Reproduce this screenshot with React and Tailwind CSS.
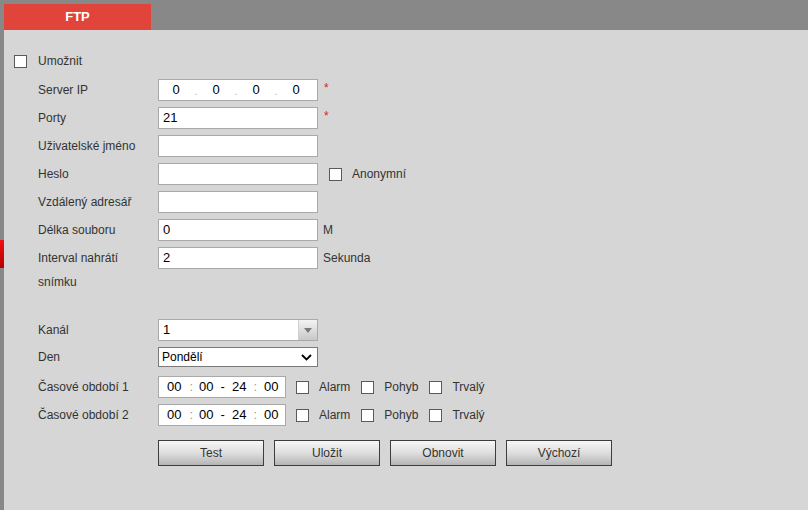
import React from 'react';

const font = { fontFamily: '"Liberation Sans", Arial, sans-serif' };

const Box = () => (
  <span className="inline-block w-[13px] h-[13px] bg-white border border-[#5a5a5a] shrink-0"></span>
);

const Label = ({ children }) => (
  <div className="w-[120px] shrink-0 text-[12px] text-[#333]">{children}</div>
);

const Input = ({ value }) => (
  <div className="w-[160px] h-[22px] bg-white border border-[#a9a9a9] flex items-center pl-[4px] text-[13px] text-black">
    {value}
  </div>
);

const Row = ({ label, children, h = 'h-[28px]' }) => (
  <div className={`flex items-center ${h}`}>
    <Label>{label}</Label>
    {children}
  </div>
);

const Star = () => <span className="ml-[6px] text-[#d22] text-[12px] -mt-[4px]">*</span>;

const TimeRange = () => (
  <div className="w-[128px] h-[22px] bg-white border border-[#a9a9a9] flex items-center text-[13px] text-black">
    <span className="ml-[8px]">00</span>
    <span className="ml-[8px] text-[#999]">:</span>
    <span className="ml-[6px]">00</span>
    <span className="ml-[7px]">-</span>
    <span className="ml-[7px]">24</span>
    <span className="ml-[7px] text-[#999]">:</span>
    <span className="ml-[7px]">00</span>
  </div>
);

const Check = ({ label, className = '' }) => (
  <div className={`flex items-center ${className}`}>
    <Box />
    <span className="ml-[10px] text-[12px] text-[#333]">{label}</span>
  </div>
);

const Btn = ({ children }) => (
  <button className="w-[106px] h-[26px] border border-[#3d3d3d] bg-gradient-to-b from-[#f7f7f7] via-[#dedede] to-[#b5b5b5] text-[12px] text-[#333]">
    {children}
  </button>
);

export default function App() {
  return (
    <div className="w-[808px] h-[510px] flex bg-[#d6d6d6] overflow-hidden" style={font}>
      <div className="w-[4px] shrink-0 bg-[#888] flex flex-col">
        <div className="h-[240px]"></div>
        <div className="h-[28px] bg-gradient-to-b from-[#f01010] to-[#b80000]"></div>
      </div>

      <div className="flex-1 flex flex-col">
        <div className="h-[30px] bg-[#888] pt-[4px] shrink-0">
          <div className="w-[147px] h-[26px] bg-[#e0443b] flex items-center justify-center text-white font-bold text-[13px]">
            FTP
          </div>
        </div>

        <div className="pl-[10px]">
          <div className="h-[46px] flex items-center pt-[16px]">
            <Box />
            <span className="ml-[11px] text-[12px] text-[#333]">Umožnit</span>
          </div>

          <div className="pl-[24px]">
            <Row label="Server IP">
              <div className="w-[160px] h-[22px] bg-white border border-[#a9a9a9] flex items-center text-[13px] text-black">
                <span className="w-[34px] text-center">0</span>
                <span className="w-[6px] text-center text-[#aaa] text-[10px] mt-[3px]">.</span>
                <span className="w-[34px] text-center">0</span>
                <span className="w-[6px] text-center text-[#aaa] text-[10px] mt-[3px]">.</span>
                <span className="w-[34px] text-center">0</span>
                <span className="w-[6px] text-center text-[#aaa] text-[10px] mt-[3px]">.</span>
                <span className="w-[34px] text-center">0</span>
              </div>
              <Star />
            </Row>
            <Row label="Porty">
              <Input value="21" />
              <Star />
            </Row>
            <Row label="Uživatelské jméno">
              <Input />
            </Row>
            <Row label="Heslo">
              <Input />
              <Check label="Anonymní" className="ml-[11px]" />
            </Row>
            <Row label="Vzdálený adresář">
              <Input />
            </Row>
            <Row label="Délka souboru">
              <Input value="0" />
              <span className="ml-[5px] text-[12px] text-[#333]">M</span>
            </Row>
            <div className="flex items-start">
              <div className="w-[120px] shrink-0 text-[12px] text-[#333] leading-[24px] pt-[2px]">
                Interval nahrátí
                <br />
                snímku
              </div>
              <div className="mt-[3px] flex items-center">
                <Input value="2" />
                <span className="ml-[5px] text-[12px] text-[#333]">Sekunda</span>
              </div>
            </div>

            <div className="mt-[22px]">
              <Row label="Kanál">
                <div className="w-[160px] h-[22px] bg-white border border-[#a9a9a9] flex items-center text-[13px] text-black">
                  <span className="flex-1 pl-[4px]">1</span>
                  <span className="w-[19px] h-full bg-gradient-to-b from-[#f4f4f4] to-[#c8c8c8] border-l border-[#d0d0d0] flex items-center justify-center">
                    <svg width="8" height="5" viewBox="0 0 8 5">
                      <path d="M0 0 L8 0 L4 5 Z" fill="#7a7a7a" />
                    </svg>
                  </span>
                </div>
              </Row>
              <Row label="Den" h="h-[26px]">
                <div className="w-[160px] h-[20px] bg-white border border-[#7a7a7a] flex items-center text-[12px] text-black">
                  <span className="flex-1 pl-[3px]">Pondělí</span>
                  <svg width="11" height="7" viewBox="0 0 11 7" className="mr-[5px]">
                    <path d="M1 1 L5.5 5.5 L10 1" stroke="#000" strokeWidth="1.8" fill="none" />
                  </svg>
                </div>
              </Row>
              <div className="mt-[3px]">
                {['Časové období 1', 'Časové období 2'].map((l) => (
                  <Row key={l} label={l}>
                    <TimeRange />
                    <Check label="Alarm" className="ml-[10px]" />
                    <Check label="Pohyb" className="ml-[11px]" />
                    <Check label="Trvalý" className="ml-[11px]" />
                  </Row>
                ))}
              </div>
            </div>

            <div className="mt-[11px] pl-[120px] flex gap-[10px]">
              <Btn>Test</Btn>
              <Btn>Uložit</Btn>
              <Btn>Obnovit</Btn>
              <Btn>Výchozí</Btn>
            </div>
          </div>
        </div>
      </div>
    </div>
  );
}
